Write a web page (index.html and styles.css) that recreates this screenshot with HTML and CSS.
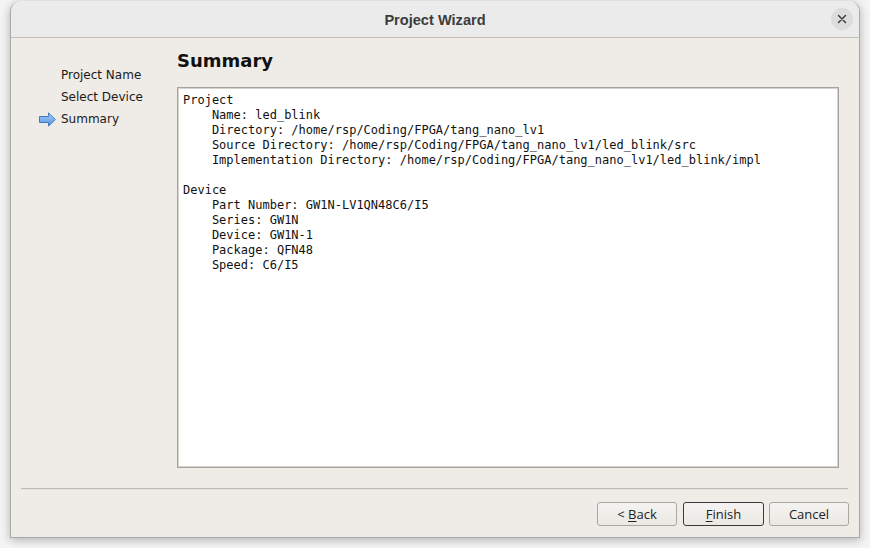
FILE: index.html
```html
<!DOCTYPE html>
<html>
<head>
<meta charset="utf-8">
<link rel="stylesheet" href="styles.css">
</head>
<body>
<div class="window">
  <div class="titlebar">
    <span class="title">Project Wizard</span>
    <span class="close"><svg width="10" height="10" viewBox="0 0 10 10"><path d="M1.5 1.5 L8.5 8.5 M8.5 1.5 L1.5 8.5" stroke="#333" stroke-width="1.4" stroke-linecap="round"/></svg></span>
  </div>
  <div class="content">
    <div class="sidebar">
      <div class="step">Project Name</div>
      <div class="step">Select Device</div>
      <div class="step current">
        <svg class="arrow" width="17" height="15" viewBox="0 0 17 15"><defs><linearGradient id="g" x1="0" y1="0" x2="0" y2="1"><stop offset="0" stop-color="#a9cff5"/><stop offset="1" stop-color="#4f93dd"/></linearGradient></defs><path d="M0.5 4.5 H9.5 V0.8 L16.2 7.5 L9.5 14.2 V10.5 H0.5 Z" fill="url(#g)" stroke="#3f79c0" stroke-width="1"/></svg>
        Summary
      </div>
    </div>
    <div class="main">
      <h1 class="heading">Summary</h1>
      <div class="summary"><pre>Project
    Name: led_blink
    Directory: /home/rsp/Coding/FPGA/tang_nano_lv1
    Source Directory: /home/rsp/Coding/FPGA/tang_nano_lv1/led_blink/src
    Implementation Directory: /home/rsp/Coding/FPGA/tang_nano_lv1/led_blink/impl

Device
    Part Number: GW1N-LV1QN48C6/I5
    Series: GW1N
    Device: GW1N-1
    Package: QFN48
    Speed: C6/I5</pre></div>
    </div>
  </div>
  <div class="footer">
    <div class="separator"></div>
    <div class="buttons">
      <button class="btn back">&lt; <u>B</u>ack</button>
      <button class="btn default"><u>F</u>inish</button>
      <button class="btn">Cancel</button>
    </div>
  </div>
</div>
</body>
</html>
```
FILE: styles.css
```css
html, body {
  margin: 0;
  padding: 0;
  background: #f4f4f4;
}
body {
  width: 870px;
  height: 548px;
  overflow: hidden;
}
.window {
  margin: 1px 0 0 10px;
  width: 850px;
  height: 537px;
  box-sizing: border-box;
  background: #efebe7;
  border: 1px solid #a9a9a9;
  border-top: none;
  border-radius: 11px 11px 0 0;
  box-shadow: 0 2px 10px rgba(0,0,0,0.28);
  display: flex;
  flex-direction: column;
  overflow: hidden;
}
.titlebar {
  height: 36px;
  flex: none;
  background: #ebebeb;
  border-bottom: 1px solid #c3c0bc;
  display: flex;
  align-items: center;
  justify-content: center;
  position: relative;
}
.title {
  font-family: "Liberation Sans", Arial, sans-serif;
  font-weight: bold;
  font-size: 14.6px;
  color: #3c3c3c;
  margin-top: 1px;
}
.close {
  position: absolute;
  right: 6px;
  top: 7px;
  width: 22px;
  height: 22px;
  border-radius: 50%;
  background: #dcdcdc;
  display: flex;
  align-items: center;
  justify-content: center;
}
.content {
  display: flex;
  flex: none;
  height: 431px;
}
.sidebar {
  width: 166px;
  flex: none;
  padding-top: 26px;
  box-sizing: border-box;
  font-family: "DejaVu Sans", sans-serif;
  font-size: 12px;
  color: #1a1a1a;
}
.step {
  height: 22px;
  line-height: 22px;
  padding-left: 50px;
  position: relative;
}
.arrow {
  position: absolute;
  left: 28px;
  top: 4px;
}
.main {
  flex: none;
  width: 662px;
  padding-top: 12px;
}
.heading {
  margin: 0 0 15px 0;
  font-family: "DejaVu Sans", sans-serif;
  font-weight: bold;
  font-size: 18px;
  line-height: 22px;
  color: #111;
}
.summary {
  height: 381px;
  box-sizing: border-box;
  background: #fff;
  border: 1px solid #a6a29d;
  box-shadow: inset 0 0 0 1px #d6d3cf;
  padding: 5px 5px;
}
.summary pre {
  margin: 0;
  font-family: "DejaVu Sans Mono", monospace;
  font-size: 12px;
  line-height: 15px;
  color: #111;
}
.footer {
  flex: none;
  padding: 19px 10px 0 10px;
}
.separator {
  height: 0;
  margin-right: 1px;
  border-top: 1px solid #bfbab4;
  border-bottom: 1px solid #e6e2de;
}
.buttons {
  display: flex;
  justify-content: flex-end;
  gap: 5px;
  margin-top: 12px;
}
.btn {
  width: 80px;
  height: 24px;
  box-sizing: border-box;
  font-family: "Open Sans", "DejaVu Sans", sans-serif;
  font-size: 13px;
  line-height: 20px;
  color: #222;
  background: linear-gradient(#f5f3f1, #ebe8e4);
  border: 1px solid #aaa6a1;
  border-radius: 3px;
  padding: 0 0 1px 0;
}
.btn.back {
  margin-right: 1px;
}
.btn.default {
  width: 81px;
  border-color: #3a3a3a;
}
.btn u {
  text-decoration-thickness: 1px;
  text-underline-offset: 2px;
}
```
